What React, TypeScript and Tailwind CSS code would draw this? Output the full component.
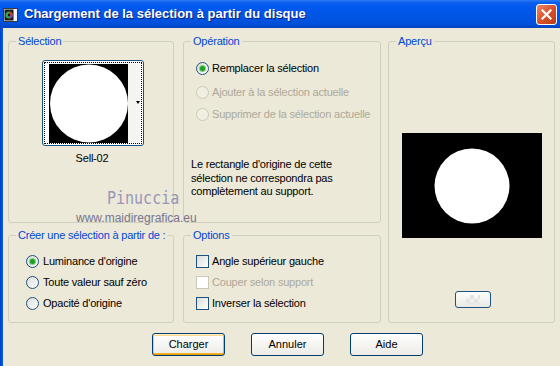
import React from 'react';

const Radio: React.FC<{ checked?: boolean; disabled?: boolean }> = ({ checked, disabled }) => (
  <span
    className={`w-[13px] h-[13px] shrink-0 rounded-full border flex items-center justify-center ${
      disabled ? 'border-[#CAC8BB] bg-[#F1EFE2]' : 'border-[#1C5180] bg-linear-to-br from-[#DCDCD7] to-white'
    }`}
  >
    {checked && <span className="w-[5px] h-[5px] rounded-full bg-[#21A121] shadow-[0_0_0_1px_#7FD27F]" />}
  </span>
);

const Check: React.FC<{ disabled?: boolean }> = ({ disabled }) => (
  <span
    className={`w-[13px] h-[13px] shrink-0 border ${
      disabled ? 'border-[#CAC8BB] bg-white' : 'border-[#1C5180] bg-linear-to-br from-[#DCDCD7] to-white'
    }`}
  />
);

const Group: React.FC<{ title: string; className?: string; children?: React.ReactNode }> = ({ title, className, children }) => (
  <fieldset className={`border border-[#D0D0BF] rounded-[3px] ${className ?? ''}`}>
    <legend className="ml-[7px] px-[2px] leading-[13px] whitespace-nowrap text-[#0046D5]">{title}</legend>
    {children}
  </fieldset>
);

const XpButton: React.FC<{ label: string; isDefault?: boolean }> = ({ label, isDefault }) => (
  <button
    className={`w-[73px] h-[23px] rounded-[3px] border border-[#003C74] bg-linear-to-b from-white to-[#ECEBE6] text-black ${
      isDefault ? 'shadow-[inset_0_1px_0_#FFF0CF,inset_0_-1px_0_#E5A000,inset_1px_0_0_#F9C765,inset_-1px_0_0_#F0B540,inset_0_2px_0_#FDD889,inset_0_-2px_0_#F8B330]' : ''
    }`}
  >
    {label}
  </button>
);

export default function App() {
  return (
    <div className="w-[560px] h-[366px] overflow-hidden bg-[#ECE9D8] flex flex-col font-['Liberation_Sans',Arial,sans-serif] text-[11px] tracking-[-0.2px] text-black leading-[13px]">
      {/* Title bar */}
      <div className="h-[28px] shrink-0 flex items-center tracking-normal bg-[linear-gradient(to_bottom,#2C7BF5_0%,#0A5EEE_10%,#0058EE_25%,#0054E3_60%,#0050DB_85%,#0043C0_100%)]">
        <svg width="16" height="16" viewBox="0 0 16 16" className="ml-[3px] mt-[1px]">
          <rect x="0.5" y="1.5" width="14" height="13" fill="#F4F4F4" stroke="#3A3A3A" />
          <rect x="1.5" y="2.5" width="9" height="11" fill="#1A1A1A" />
          <circle cx="6" cy="8" r="3.6" fill="#2FA84F" />
          <path d="M6 4.4 A3.6 3.6 0 0 1 9.6 8 L6 8 Z" fill="#D9362B" />
          <path d="M6 8 L9.6 8 A3.6 3.6 0 0 1 6 11.6 Z" fill="#8E3FB8" />
          <circle cx="6" cy="8" r="1.2" fill="#111" />
        </svg>
        <span className="ml-[5px] text-white font-bold text-[13px] leading-[16px] [text-shadow:1px_1px_0_#0A1E80]">
          Chargement de la sélection à partir du disque
        </span>
        <div className="ml-auto mr-[3px] w-[21px] h-[21px] rounded-[3px] border border-white bg-linear-to-br from-[#E9896A] via-[#D8522C] to-[#B93A12] flex items-center justify-center">
          <svg width="11" height="11" viewBox="0 0 11 11">
            <path d="M1.5 1.5 L9.5 9.5 M9.5 1.5 L1.5 9.5" stroke="white" strokeWidth="2.2" strokeLinecap="square" />
          </svg>
        </div>
      </div>

      {/* Body */}
      <div className="flex-1 flex">
        <div className="w-[3px] bg-linear-to-r from-[#0040C0] to-[#0860EE]" />
        <div className="flex-1 relative pl-[5px] pt-[7px]">
          <div className="flex">
            {/* Column 1 */}
            <div className="w-[166px] flex flex-col gap-[6px]">
              <Group title="Sélection" className="h-[188px] flex flex-col items-center">
                <div className="mt-[12px] ml-[3px] w-[102px] h-[86px] rounded-[3px] border border-[#1C5180] bg-white p-px">
                  <div className="w-full h-full border border-dotted border-black flex items-center justify-center">
                    <svg width="91" height="79" viewBox="0 0 91 79" className="ml-[3px]">
                      <rect x="0" y="0" width="79" height="79" fill="#000" />
                      <rect x="79" y="0" width="12" height="79" fill="#F4F4F1" />
                      <circle cx="40" cy="39.5" r="39" fill="#fff" />
                      <path d="M87 37 L91 37 L89 40 Z" fill="#000" />
                    </svg>
                  </div>
                </div>
                <div className="mt-[6px] ml-[2px]">Sell-02</div>
              </Group>
              <Group title="Créer une sélection à partir de :" className="h-[94px]">
                <div className="pl-[17px] pt-[13px] flex flex-col gap-[8px]">
                  <label className="flex items-center gap-[4px] h-[13px]">
                    <Radio checked />
                    Luminance d'origine
                  </label>
                  <label className="flex items-center gap-[4px] h-[13px]">
                    <Radio />
                    Toute valeur sauf zéro
                  </label>
                  <label className="flex items-center gap-[4px] h-[13px]">
                    <Radio />
                    Opacité d'origine
                  </label>
                </div>
              </Group>
            </div>

            {/* Column 2 */}
            <div className="w-[198px] ml-[9px] flex flex-col gap-[6px]">
              <Group title="Opération" className="h-[188px]">
                <div className="pl-[12px] pt-[14px] flex flex-col">
                  <label className="flex items-center gap-[3px] h-[13px]">
                    <Radio checked />
                    Remplacer la sélection
                  </label>
                  <label className="flex items-center gap-[3px] h-[13px] mt-[11px] text-[#ACA899]">
                    <Radio disabled />
                    Ajouter à la sélection actuelle
                  </label>
                  <label className="flex items-center gap-[3px] h-[13px] mt-[9px] text-[#ACA899]">
                    <Radio disabled />
                    Supprimer de la sélection actuelle
                  </label>
                </div>
                <p className="pl-[7px] mt-[37px] leading-[13.5px]">
                  Le rectangle d'origine de cette
                  <br />
                  sélection ne correspondra pas
                  <br />
                  complètement au support.
                </p>
              </Group>
              <Group title="Options" className="h-[94px]">
                <div className="pl-[12px] pt-[13px] flex flex-col gap-[8px]">
                  <label className="flex items-center gap-[3px] h-[13px]">
                    <Check />
                    Angle supérieur gauche
                  </label>
                  <label className="flex items-center gap-[3px] h-[13px] text-[#ACA899]">
                    <Check disabled />
                    Couper selon support
                  </label>
                  <label className="flex items-center gap-[3px] h-[13px]">
                    <Check />
                    Inverser la sélection
                  </label>
                </div>
              </Group>
            </div>

            {/* Column 3 */}
            <div className="w-[167px] ml-[7px]">
              <Group title="Aperçu" className="h-[288px] flex flex-col items-center">
                <svg width="140" height="105" viewBox="0 0 140 105" className="mt-[85px]">
                  <rect x="0" y="0" width="140" height="105" fill="#000" />
                  <circle cx="70" cy="53" r="37.5" fill="#fff" />
                </svg>
                <button className="mt-[53px] ml-[2px] w-[36px] h-[17px] rounded-[3px] border border-[#1C5180] bg-linear-to-b from-white to-[#E8E8E4] flex items-center justify-center">
                  <span className="w-[14px] h-[9px] bg-[linear-gradient(45deg,#E4E4E0_25%,transparent_25%,transparent_75%,#E4E4E0_75%),linear-gradient(45deg,#E4E4E0_25%,transparent_25%,transparent_75%,#E4E4E0_75%)] bg-size-[8px_8px] bg-position-[0_0,4px_4px]" />
                </button>
              </Group>
            </div>
          </div>

          {/* Buttons */}
          <div className="mt-[10px] ml-[144px] flex gap-[26px] tracking-normal">
            <XpButton label="Charger" isDefault />
            <XpButton label="Annuler" />
            <XpButton label="Aide" />
          </div>

          {/* Watermark */}
          <div className="absolute left-[104px] top-[163px] text-[15px] leading-[19px] tracking-normal scale-y-[1.15] origin-bottom text-[#9896B8] font-['DejaVu_Sans_Mono',monospace] pointer-events-none">
            Pinuccia
          </div>
          <div className="absolute left-[73px] top-[184px] text-[12px] leading-[12px] tracking-normal text-[#76758E] font-['Liberation_Sans',sans-serif] pointer-events-none">
            www.maidiregrafica.eu
          </div>
        </div>
      </div>
    </div>
  );
}
